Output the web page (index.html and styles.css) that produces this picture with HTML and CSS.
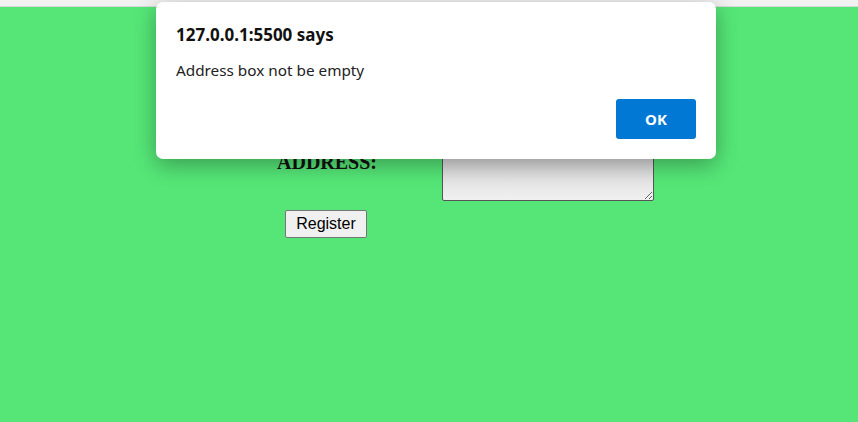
FILE: index.html
```html
<!DOCTYPE html>
<html>
<head>
<meta charset="utf-8">
<link rel="stylesheet" href="styles.css">
</head>
<body>
<div class="topstrip"></div>
<main class="page">
  <form class="form">
    <div class="row">
      <label class="label" for="addr">ADDRESS:</label>
      <textarea id="addr" class="addr"></textarea>
    </div>
    <button type="button" class="register">Register</button>
  </form>
</main>
<div class="dialog">
  <div class="title">127.0.0.1:5500 says</div>
  <div class="message">Address box not be empty</div>
  <div class="actions"><button type="button" class="ok">OK</button></div>
</div>
</body>
</html>
```
FILE: styles.css
```css
html, body { margin: 0; padding: 0; }
body {
  background: #55e677;
  height: 422px;
  overflow: hidden;
  font-family: "Liberation Serif", serif;
  position: relative;
}
.topstrip {
  height: 6px;
  background: #f1f1f1;
  border-bottom: 1px solid #d9d9d9;
}
.page { padding: 133px 0 0 277px; }
.form { display: flex; flex-direction: column; align-items: flex-start; }
.row {
  display: grid;
  grid-template-columns: 165px 212px;
  align-items: center;
}
.label {
  font-weight: bold;
  font-size: 20px;
  color: #111;
  padding-bottom: 16px;
}
.addr {
  box-sizing: border-box;
  width: 212px;
  height: 61px;
  margin: 0;
  border: 1px solid #555;
  border-radius: 2px;
  background: linear-gradient(#cfcfcf, #f0f0f0);
  resize: both;
}
.register {
  margin: 9px 0 0 8px;
  box-sizing: border-box;
  width: 82px;
  height: 28px;
  font-family: "Liberation Sans", Arial, sans-serif;
  font-size: 16px;
  color: #000;
  background: #f0f0f0;
  border: 1px solid #767676;
  border-radius: 2px;
  padding: 0;
}
.dialog {
  position: absolute;
  left: 156px;
  top: 2px;
  width: 560px;
  height: 157px;
  box-sizing: border-box;
  background: #fff;
  border-radius: 7px;
  box-shadow: 0 6px 22px rgba(0,0,0,0.32);
  padding: 23px 20px 0 20px;
  font-family: "Noto Sans", "Open Sans", sans-serif;
  color: #111;
}
.title { font-weight: bold; font-size: 17px; line-height: 20px; }
.message { font-size: 15.3px; line-height: 20px; margin-top: 15px; color: #222; }
.actions { display: flex; justify-content: flex-end; margin-top: 19px; }
.ok {
  width: 80px;
  height: 40px;
  border: none;
  border-radius: 3px;
  background: #0078d4;
  color: #fff;
  font-family: "Noto Sans", "Open Sans", sans-serif;
  font-weight: bold;
  font-size: 15px;
}
```
